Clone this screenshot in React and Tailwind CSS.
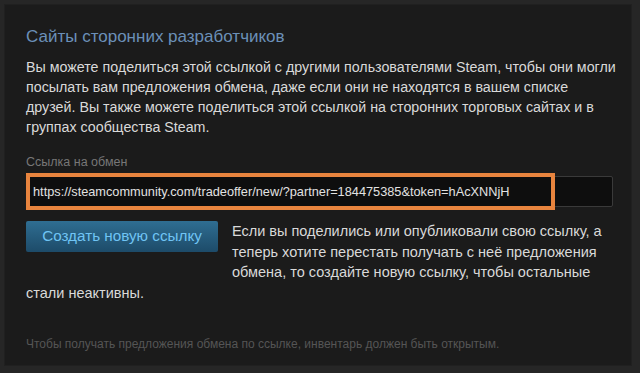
import React from "react";

// trade url panel
const App = () => {
  const url =
    "https://steamcommunity.com/tradeoffer/new/?partner=184475385&token=hAcXNNjH";

  return (
    <div
      className="w-[640px] h-[373px] bg-[#262626] p-[4px] pr-[8px] pb-[7px]"
      style={{ fontFamily: '"Liberation Sans", Arial, sans-serif' }}
    >
      <div className="h-full bg-[#1b1b1b] border border-[#202020] pl-[21px] pr-[10px] pt-[21px]">
        <h2 className="text-[17px] leading-[22px] text-[#6b90b8]">
          Сайты сторонних разработчиков
        </h2>

        <p className="mt-[9px] text-[14.25px] leading-[20px] text-[#d9d9d9]">
          Вы можете поделиться этой ссылкой с другими пользователями Steam,
          чтобы они могли посылать вам предложения обмена, даже если они не
          находятся в вашем списке друзей. Вы также можете поделиться этой
          ссылкой на сторонних торговых сайтах и в группах сообщества Steam.
        </p>

        <div className="mt-[18px] text-[12.5px] leading-[14px] text-[#777777]">
          Ссылка на обмен
        </div>

        <div className="relative mt-[7px] mr-[8px] h-[31px] bg-[#0e0e0e] border border-[#3a3a3a] rounded-[2px] flex items-center px-[6px]">
          <span className="text-[12.75px] text-[#e2e2e2] whitespace-nowrap">
            {url}
          </span>
          {/* highlight frame */}
          <div className="absolute left-[-1px] top-[-4px] w-[529px] h-[37px] border-[4px] border-[#e8843e]" />
        </div>

        <div className="mt-[14px] text-[14.5px] leading-[20.5px] text-[#d9d9d9]">
          <button className="float-left mr-[14px] mb-[20px] w-[192px] h-[31px] rounded-[2px] bg-gradient-to-b from-[#2f6e92] to-[#1d4b69] text-[15.25px] text-[#70c4f4]">
            Создать новую ссылку
          </button>
          <span>
            Если вы поделились или опубликовали свою ссылку, а теперь хотите
            перестать получать с неё предложения обмена, то создайте новую
            ссылку, чтобы остальные стали неактивны.
          </span>
        </div>

        <div className="clear-both pt-[34px] text-[12px] leading-[14px] text-[#555555]">
          Чтобы получать предложения обмена по ссылке, инвентарь должен быть
          открытым.
        </div>
      </div>
    </div>
  );
};

export default App;
